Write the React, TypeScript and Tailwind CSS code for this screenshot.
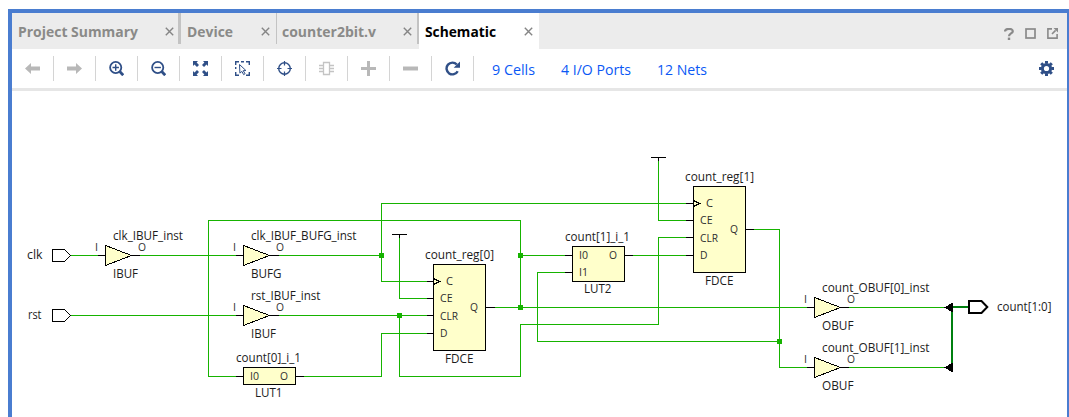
import React from 'react';

const BLUE = '#2f4f87';
const GREY = '#b8b8b8';

function Close() {
  return (
    <svg width="9" height="9" viewBox="0 0 9 9" className="shrink-0">
      <path d="M.8.8 8.2 8.2M8.2.8.8 8.2" stroke="#858585" strokeWidth="1.4" fill="none" />
    </svg>
  );
}

type TabProps = { label: string; box: string; text: number; divider?: string; active?: boolean };

function Tab({ label, box, text, divider, active }: TabProps) {
  return (
    <div className={`flex h-9 shrink-0 ${box} ${active ? 'bg-white' : ''}`}>
      <div className="flex flex-1 items-center justify-between">
        <svg width={text + 6} height="36" className="shrink-0 overflow-visible">
          <text
            x="0"
            y="24"
            textLength={text}
            fontSize="14.5"
            fontWeight="700"
            fill={active ? '#000' : '#8a8a88'}
            lengthAdjust="spacingAndGlyphs"
          >
            {label}
          </text>
        </svg>
        <Close />
      </div>
      {divider && <div className={`h-[31px] shrink-0 bg-[#c3c3c3] ${divider}`} />}
    </div>
  );
}

const icons: React.ReactNode[] = [
  <path d="M0 7.5 6 2v3.5h9v4H6V13z" fill={GREY} />,
  <path d="M15 7.5 9 2v3.5H0v4h9V13z" fill={GREY} />,
  <g fill="none" stroke={BLUE}>
    <circle cx="6.7" cy="6.5" r="5.6" strokeWidth="1.8" />
    <path d="M3.5 6.5h6.4M6.7 3.3v6.4" strokeWidth="1.4" />
    <path d="m10.7 10.5 3.5 3.7" strokeWidth="2.8" />
  </g>,
  <g fill="none" stroke={BLUE}>
    <circle cx="6.7" cy="6.5" r="5.6" strokeWidth="1.8" />
    <path d="M3.5 6.5h6.4" strokeWidth="1.4" />
    <path d="m10.7 10.5 3.5 3.7" strokeWidth="2.8" />
  </g>,
  <path
    d="M0 0h5L3.6 1.5 6 4 4 6 1.5 3.6 0 5zM15 0v5l-1.5-1.4L11 6 9 4l2.4-2.5L10 0zM0 15v-5l1.5 1.4L4 9l2 2-2.4 2.5L5 15zM15 15h-5l1.4-1.5L9 11l2-2 2.5 2.4L15 10z"
    fill={BLUE}
  />,
  <g fill="none" stroke={BLUE}>
    <path d="M.7 4V.7H4M11 .7h3.3V4M14.3 11v3.3H11M4 14.3H.7V11M6 .7h3M.7 6v2" strokeWidth="1.4" />
    <path d="m4.5 3.5 6.4 6-2.7.2 1.9 3-1.5.9-1.7-3.2-2 1.7z" strokeWidth="1" />
  </g>,
  <g fill="none" stroke={BLUE}>
    <circle cx="7.5" cy="7.5" r="5.8" strokeWidth="1.4" />
    <path d="M7.5 0v4.5M7.5 10.5V15M0 7.5h4.5M10.5 7.5H15" strokeWidth="1.2" />
  </g>,
  <g fill="none" stroke="#c4c4c4" strokeWidth="1.3">
    <path d="M4.5 1.5h6v12h-6zM0 4.5h4.5M0 10.5h4.5M0 7.5h4.5M10.5 4.5H15M10.5 7.5H15M10.5 10.5H15" />
  </g>,
  <path d="M6 0h3v6h6v3H9v6H6V9H0V6h6z" fill={GREY} />,
  <path d="M0 5.5h15v4H0z" fill={GREY} />,
  <g>
    <path d="M11.8 3.5A5.9 5.9 0 1 0 12.7 10.2" fill="none" stroke={BLUE} strokeWidth="2.4" />
    <path d="M15 .5v6.3H8.7z" fill={BLUE} />
  </g>,
];

function Link({ children, w, box }: { children: string; w: number; box: string }) {
  return (
    <svg width={w + 2} height="39" className={`shrink-0 overflow-visible ${box}`}>
      <text x="0" y="26" fontSize="15" fill="#0a58f5" textLength={w} lengthAdjust="spacingAndGlyphs">
        {children}
      </text>
    </svg>
  );
}

type Label = [string, number, number, number];

const names: Label[] = [
  ['clk', 27, 259, 15.5],
  ['rst', 28, 319, 13.5],
  ['clk_IBUF_inst', 113, 240, 70],
  ['IBUF', 113, 278, 25],
  ['clk_IBUF_BUFG_inst', 251, 240, 105.5],
  ['BUFG', 251, 278, 30.5],
  ['rst_IBUF_inst', 251, 300, 69.5],
  ['IBUF', 251, 338, 25],
  ['count[0]_i_1', 236, 362, 65],
  ['LUT1', 255, 397, 27.5],
  ['count_reg[0]', 425, 259, 69],
  ['FDCE', 445, 363, 28.5],
  ['count[1]_i_1', 565, 241, 65],
  ['LUT2', 584, 293, 27.5],
  ['count_reg[1]', 685, 181, 69],
  ['FDCE', 705, 285, 28.5],
  ['count_OBUF[0]_inst', 822, 292, 107.5],
  ['OBUF', 822, 330, 31.5],
  ['count_OBUF[1]_inst', 822, 352, 107.5],
  ['OBUF', 822, 390, 31.5],
  ['count[1:0]', 997, 311, 54.5],
];

const pins: Label[] = [
  ['I', 95, 251, 3],
  ['O', 138, 251, 8],
  ['I', 233, 251, 3],
  ['O', 276, 251, 8],
  ['I', 233, 311, 3],
  ['O', 276, 311, 8],
  ['I0', 250, 380, 9],
  ['O', 280, 380, 8],
  ['C', 446, 285, 7],
  ['CE', 440, 302, 12.5],
  ['CLR', 440, 320, 18],
  ['D', 440, 337, 7.5],
  ['Q', 470, 311, 8],
  ['I0', 579, 259, 9],
  ['O', 609, 259, 8],
  ['I1', 579, 276, 9],
  ['C', 706, 207, 7],
  ['CE', 700, 224, 12.5],
  ['CLR', 700, 242, 18],
  ['D', 700, 259, 7.5],
  ['Q', 730, 233, 8],
  ['I', 804, 303, 3],
  ['O', 847, 303, 8],
  ['I', 804, 363, 3],
  ['O', 847, 363, 8],
];

const wires = [
  'M70 255H97',
  'M139 255H235',
  'M278 255H381',
  'M70 315H235',
  'M278 315H426',
  'M685 203H381V281H426',
  'M399 236V298H426',
  'M399 315V376H520V324H658V237H685',
  'M303 376H381V333H426',
  'M235 376H208V220H520V307',
  'M494 307H806',
  'M520 255H564',
  'M632 255H685',
  'M564 272H537V341H779',
  'M658 159V220H685',
  'M753 229H779V367H806',
  'M848 307H945',
  'M848 367H945',
];

const leads = [
  'M97 255H105M131 255H139',
  'M235 255H243M269 255H278',
  'M235 315H243M269 315H278',
  'M235 376H243M295 376H303',
  'M426 281H433M426 298H433M426 315H433M426 333H433M485 307H494',
  'M564 255H572M564 272H572M624 255H632',
  'M685 203H693M685 220H693M685 237H693M685 255H693M745 229H753',
  'M806 307H814M840 307H848',
  'M806 367H814M840 367H848',
  'M391.5 234H406.5M399 234V237',
  'M650.5 157H665.5M658 157V160',
];

const buffers = [
  [105, 255],
  [243, 255],
  [243, 315],
  [814, 307],
  [814, 367],
];
const blocks = [
  [243, 367, 52, 17],
  [433, 264, 52, 86],
  [572, 246, 52, 35],
  [693, 186, 52, 86],
];
const junctions = [
  [381, 255],
  [399, 315],
  [520, 255],
  [520, 307],
  [779, 341],
];

function Schematic() {
  return (
    <svg width="1055" height="326" viewBox="12 91 1055 326" className="block shrink-0">
      <g transform="translate(.5 .5)" fill="none" shapeRendering="crispEdges" strokeWidth="1">
        {wires.map((d) => (
          <path key={d} d={d} stroke="#16b300" />
        ))}
        {leads.map((d) => (
          <path key={d} d={d} stroke="#000" />
        ))}
        {buffers.map(([x, y]) => (
          <path key={`${x}-${y}`} d={`M${x} ${y - 10}v20l26 -10z`} fill="#ffffcb" stroke="#000" />
        ))}
        {blocks.map(([x, y, w, h]) => (
          <rect key={`${x}-${y}`} x={x} y={y} width={w} height={h} fill="#ffffcb" stroke="#000" />
        ))}
        {junctions.map(([x, y]) => (
          <rect key={`${x}-${y}`} x={x - 2.5} y={y - 2.5} width="5" height="5" fill="#16b300" />
        ))}
        <path d="M433 278l6 3-6 3M693 200l6 3-6 3" stroke="#000" />
        <path d="M52 249h12l6 6-6 6H52zM52 309h12l6 6-6 6H52z" stroke="#000" />
      </g>
      <g shapeRendering="crispEdges">
        <path d="M952 311V364M952 307H969" stroke="#008010" strokeWidth="2" fill="none" />
        <path d="M944 307.5l9-5v10zM944 367.5l9-5v10z" fill="#000" />
      </g>
      <path d="M969 301h12.5l5.8 6-5.8 6H969z" fill="#fff" stroke="#000" strokeWidth="2" />
      <g fontSize="12" fill="#1c1c1c">
        {names.map(([t, x, y, w]) => (
          <text key={`${x}-${y}`} x={x} y={y} textLength={w} lengthAdjust="spacingAndGlyphs">
            {t}
          </text>
        ))}
      </g>
      <g fontSize="10" fill="#2e2e2e">
        {pins.map(([t, x, y, w]) => (
          <text key={`${x}-${y}`} x={x} y={y} textLength={w} lengthAdjust="spacingAndGlyphs">
            {t}
          </text>
        ))}
      </g>
    </svg>
  );
}

export default function App() {
  return (
    <div className="h-[417px] w-[1069px] overflow-hidden bg-white pl-2 pt-[9px] font-['Open_Sans','Noto_Sans',sans-serif]">
      <div className="flex h-[408px] w-[1061px] flex-col border-x-4 border-t-4 border-r-2 border-[#4a7dd0] bg-white">
        <div className="flex h-9 shrink-0 justify-between bg-[#ececec]">
          <div className="flex">
            <Tab label="Project Summary" box="w-[169px] pl-[6px]" text={120} divider="ml-1 w-[3px]" />
            <Tab label="Device" box="w-[96px] pl-[6px]" text={46} divider="ml-[6px] w-px" />
            <Tab label="counter2bit.v" box="w-[142px] pl-[5px]" text={94} divider="ml-[5px] w-[2px]" />
            <Tab label="Schematic" box="w-[120px] pl-[6px] pr-[6px]" text={71} active />
          </div>
          <div className="flex items-center gap-[11px] pr-[9px] pt-[5px]">
            <svg width="10" height="12" viewBox="0 0 10 12" fill="none">
              <path d="M1 3.5C1 0 8.8 0 8.8 3.2 8.8 5.5 5 5.4 5 8.2" stroke="#8a8a8a" strokeWidth="2.2" />
              <path d="M3.8 9.6h2.4V12H3.8z" fill="#8a8a8a" />
            </svg>
            <svg width="11" height="11" viewBox="0 0 11 11" fill="none">
              <rect x="1" y="1" width="9" height="9" stroke="#8a8a8a" strokeWidth="1.7" />
            </svg>
            <svg width="11" height="11" viewBox="0 0 11 11" fill="none" stroke="#8a8a8a" strokeWidth="1.6">
              <path d="M5 .9H.9v9.2h9.2V6M5 6l3.6-3.6" />
              <path d="M6.5 0H11v4.5z" fill="#8a8a8a" stroke="none" />
            </svg>
          </div>
        </div>
        <div className="flex h-[39px] shrink-0 items-center">
          {icons.map((icon, i) => (
            <div key={i} className="flex h-[25px] w-[42px] shrink-0 items-center justify-center border-r border-[#d4d4d4]">
              <svg width="15" height="15" viewBox="0 0 15 15">
                {icon}
              </svg>
            </div>
          ))}
          <Link w={43} box="ml-[18px]">9 Cells</Link>
          <Link w={70} box="ml-6">4 I/O Ports</Link>
          <Link w={50} box="ml-6">12 Nets</Link>
          <svg width="15" height="15" viewBox="0 0 15 15" className="ml-auto mr-[13px]" fill="none" stroke={BLUE}>
            <circle cx="7.5" cy="7.5" r="4.1" strokeWidth="3" />
            <path
              d="M7.5 0v2.5M7.5 12.5V15M0 7.5h2.5M12.5 7.5H15M2.2 2.2 4 4M11 11l1.8 1.8M12.8 2.2 11 4M4 11l-1.8 1.8"
              strokeWidth="3"
            />
          </svg>
        </div>
        <div className="h-[3px] shrink-0 bg-[#e6e6e6]" />
        <Schematic />
      </div>
    </div>
  );
}
